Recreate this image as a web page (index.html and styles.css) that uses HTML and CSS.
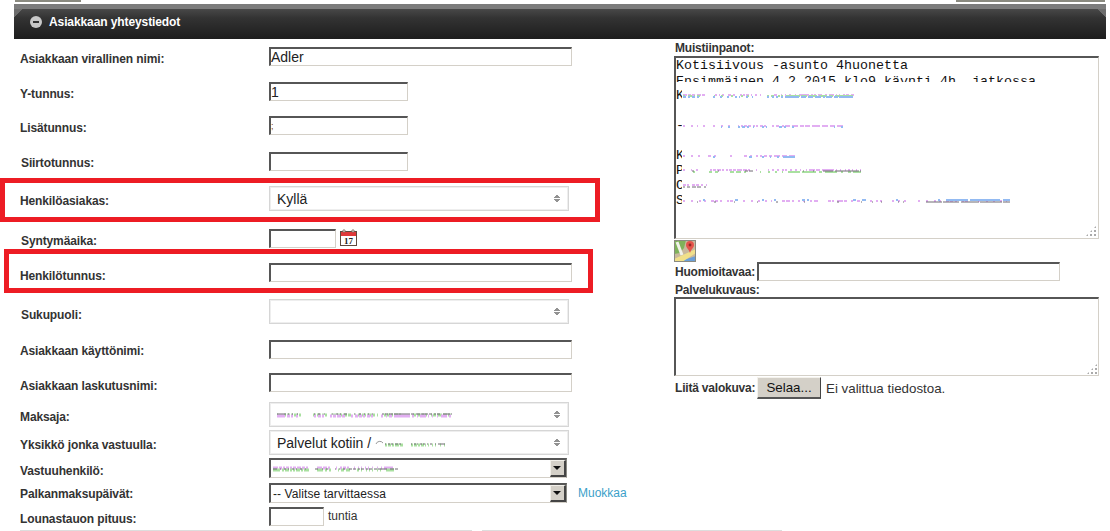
FILE: index.html
```html
<!DOCTYPE html>
<html lang="fi">
<head>
<meta charset="utf-8">
<title>Asiakkaan yhteystiedot</title>
<link rel="stylesheet" href="styles.css">
</head>
<body>
<div class="tabs"><span class="tab tab-a"></span><span class="tab tab-b"></span></div>
<section class="panel">
  <header class="panel-head">
    <span class="collapse"></span>
    <h2 class="panel-title">Asiakkaan yhteystiedot</h2>
  </header>
  <div class="panel-body">
    <form class="fields">
      <label class="lbl o5">Asiakkaan virallinen nimi:</label>
      <div class="ctl"><input class="inp wide big" value="Adler"></div>
      <label class="lbl o5">Y-tunnus:</label>
      <div class="ctl"><input class="inp mid big" value="1"></div>
      <label class="lbl o5">Lisätunnus:</label>
      <div class="ctl"><input class="inp mid tiny" value=";"></div>
      <label class="lbl o4 nudge">Siirtotunnus:</label>
      <div class="ctl"><input class="inp mid"></div>
      <label class="lbl o8">Henkilöasiakas:</label>
      <div class="ctl"><div class="sel"><span class="sel-text">Kyllä</span><span class="updown"></span></div></div>
      <label class="lbl o5 nudge">Syntymäaika:</label>
      <div class="ctl date">
        <input class="inp short">
        <svg class="cal" width="17" height="17" viewBox="0 0 17 17">
          <rect x="0.5" y="2.5" width="16" height="14" fill="#fff" stroke="#5e4a3e"/>
          <rect x="1" y="3" width="15" height="4" fill="#e0393a"/>
          <circle cx="4" cy="2" r="1.3" fill="#d9d0c8" stroke="#6b5a50" stroke-width=".6"/>
          <circle cx="13" cy="2" r="1.3" fill="#d9d0c8" stroke="#6b5a50" stroke-width=".6"/>
          <text x="8.5" y="15" class="cal-num">17</text>
        </svg>
      </div>
      <label class="lbl o6">Henkilötunnus:</label>
      <div class="ctl"><input class="inp wide"></div>
      <label class="lbl o9 nudge">Sukupuoli:</label>
      <div class="ctl"><div class="sel"><span class="sel-text"></span><span class="updown"></span></div></div>
      <label class="lbl o4">Asiakkaan käyttönimi:</label>
      <div class="ctl"><input class="inp wide"></div>
      <label class="lbl o6">Asiakkaan laskutusnimi:</label>
      <div class="ctl"><input class="inp wide"></div>
      <label class="lbl o8">Maksaja:</label>
      <div class="ctl"><div class="sel">
        <svg class="smudge" width="175" height="10" viewBox="0 0 175 10">
          <line class="s-g" x1="0" x2="175" y1="5" y2="5" stroke-dasharray="1 6 2 1 3 1 2 1 4 1 2 12 3 1 4 1 2 1 2 4 1 1 3 1 5 1 4 1 3 4 1 2 3 1 4 1 5 1 2 2"/>
          <line class="s-p" x1="0" x2="175" y1="6" y2="6" stroke-dasharray="8 2 3 1 2 3 2 16 2 2 3 1 2 6 2 1 3 1 4 1 3 6 2 2 3 1 3 1 2 2 3 1 2"/>
          <line class="s-d" x1="0" x2="175" y1="4" y2="4" stroke-dasharray="9 2 1 3 1 4 1 16 1 3 2 4 1 7 1 3 2 2 1 3 3 7 1 4 2 3 1 3 1 3 1"/>
        </svg>
        <span class="updown"></span>
      </div></div>
      <label class="lbl o8">Yksikkö jonka vastuulla:</label>
      <div class="ctl"><div class="sel"><span class="sel-text">Palvelut kotiin / </span>
        <svg class="smudge tail" width="70" height="12" viewBox="0 0 70 12">
          <path class="s-arc" d="M1 7a4 4 0 0 1 7-1"/>
          <line class="s-g" x1="10" x2="70" y1="8" y2="8" stroke-dasharray="2 1 3 1 2 1 4 1 3 8 2 1 3 1 2 1 3 1 1"/>
          <line class="s-d" x1="10" x2="70" y1="7" y2="7" stroke-dasharray="1 2 2 1 2 2 3 1 2 10 1 2 2 1 1 2 2"/>
        </svg>
        <span class="updown"></span>
      </div></div>
      <label class="lbl o6">Vastuuhenkilö:</label>
      <div class="ctl"><div class="combo">
        <svg class="smudge" width="125" height="10" viewBox="0 0 125 10">
          <line class="s-p" x1="0" x2="125" y1="4" y2="4" stroke-dasharray="5 1 3 1 2 1 3 1 2 1 3 1 4 1 3 1 2 9 5 1 4 1 2 6 1 3 2 1 3 1 2"/>
          <line class="s-g" x1="0" x2="125" y1="6" y2="6" stroke-dasharray="7 2 2 1 4 1 2 1 2 1 4 1 2 1 5 8 6 2 2 2 2 7 1 2 3 2 4"/>
          <line class="s-d" x1="0" x2="125" y1="5" y2="5" stroke-dasharray="4 3 1 3 2 2 1 3 2 2 1 3 2 3 1 9 3 4 1 3 2 7 1 3 1 3 2"/>
        </svg>
        <span class="combo-btn"></span>
      </div></div>
      <label class="lbl o4">Palkanmaksupäivät:</label>
      <div class="ctl"><div class="combo"><span class="combo-text">-- Valitse tarvittaessa</span><span class="combo-btn"></span></div><a class="edit" href="#">Muokkaa</a></div>
      <label class="lbl o5">Lounastauon pituus:</label>
      <div class="ctl"><input class="inp lunch"><span class="unit">tuntia</span></div>
    </form>
    <div class="notes">
      <div class="note-label">Muistiinpanot:</div>
      <div class="memo" role="textbox">
        <div class="memo-line">Kotisiivous -asunto 4huonetta</div>
        <div class="memo-line"><span class="cut">Ensimmäinen 4.2.2015 klo9 käynti 4h, jatkossa</span></div>
        <div class="memo-line"><span class="first">K</span>
          <svg class="smudge-m" width="172" height="10" viewBox="0 0 172 10">
            <line class="s-p" x1="0" x2="172" y1="4" y2="4" stroke-dasharray="4 1 3 1 3 2 4 1 3 10 2 2 1 2 2 4 3 2 2 5 2 1 2 1 3 2 1 3 2 3 1 13 3"/>
            <line class="s-g" x1="0" x2="172" y1="5" y2="5" stroke-dasharray="2 3 4 2 1 2 3 14 1 6 2 8 2 8 2 4 2 18 2"/>
            <line class="s-b" x1="0" x2="172" y1="6" y2="6" stroke-dasharray="3 2 2 2 3 2 2 14 2 5 2 5 2 6 2 2 1 6 2 4 1 14 2"/>
          </svg></div>
        <div class="memo-line"></div>
        <div class="memo-line"><span class="first">-</span>
          <svg class="smudge-m" width="160" height="10" viewBox="0 0 160 10">
            <line class="s-p" x1="0" x2="160" y1="5" y2="5" stroke-dasharray="2 6 2 4 1 5 2 8 2 6 2 5 2 8 1 2 2 1 3 1 3 2 2 1 2 2 3 1 2 6 2 2 3 3 2 1 5"/>
            <line class="s-b" x1="0" x2="160" y1="6" y2="6" stroke-dasharray="0 38 1 6 2 8 2 2 3 2 2 4 1 8 2 2 1 12 3 2 2 6 2 2"/>
          </svg></div>
        <div class="memo-line"></div>
        <div class="memo-line"><span class="first">K</span>
          <svg class="smudge-m" width="112" height="10" viewBox="0 0 112 10">
            <line class="s-p" x1="0" x2="112" y1="5" y2="5" stroke-dasharray="2 6 2 5 2 8 3 3 2 14 2 12 3 3 2 4 2 2 2 2 3 2 3"/>
            <line class="s-b" x1="0" x2="112" y1="6" y2="6" stroke-dasharray="0 30 2 34 3 10 2 6 1 6 2 4 2"/>
          </svg></div>
        <div class="memo-line"><span class="first">P</span>
          <svg class="smudge-m" width="178" height="10" viewBox="0 0 178 10">
            <line class="s-p" x1="0" x2="178" y1="4" y2="4" stroke-dasharray="2 6 1 4 2 12 2 1 3 1 4 1 2 2 2 1 3 1 3 1 5 1 4 1 2 6 1 11 1 3 2 3 2 3 2 1 2 3 2 3 2 3 1 5 1"/>
            <line class="s-g" x1="0" x2="178" y1="6" y2="6" stroke-dasharray="0 10 2 14 3 3 3 12 4 2 5 3 2 14 1 7 2 5 2 5 1 5 2"/>
            <line class="s-d" x1="0" x2="178" y1="5" y2="5" stroke-dasharray="0 9 2 24 1 26 3 1 4 50 1 9 1 9 1"/>
          </svg></div>
        <div class="memo-line"><span class="first">C</span>
          <svg class="smudge-m" width="25" height="10" viewBox="0 0 25 10">
            <line class="s-p" x1="0" x2="25" y1="4" y2="4" stroke-dasharray="3 1 2 3 3 1 3 2 2"/>
            <line class="s-d" x1="0" x2="25" y1="6" y2="6" stroke-dasharray="2 2 3 2 4 1 4 3 2"/>
          </svg></div>
        <div class="memo-line"><span class="first">S</span>
          <svg class="smudge-m" width="327" height="10" viewBox="0 0 327 10">
            <line class="s-p" x1="0" x2="327" y1="5" y2="5" stroke-dasharray="2 6 2 6 2 3 2 5 3 1 3 2 2 5 2 1 3 10 2 6 2 5 2 5 2 4 1 10 3 1 4 2 2 4 2 3 2 5 2 2 4 10 3 1 2 3 6 1 3 4 2 4 3 10 2 4 2 2 2 10 2 4 2 4 2 12"/>
            <line class="s-b" x1="0" x2="327" y1="4" y2="4" stroke-dasharray="0 20 2 30 3 24 2 10 2 26 3 2 2 44 3 6 4 30 2 40 2 6 2"/>
            <line class="s-d" x1="0" x2="327" y1="6" y2="6" stroke-dasharray="0 14 1 16 2 18 1 22 1 18 2 26 1 32 2 22 1 10 1 8 1 16 1 4 1 22 2"/>
          </svg></div>
        <span class="grip"></span>
      </div>
      <svg class="map" width="22" height="22" viewBox="0 0 22 22">
        <rect width="22" height="22" fill="#c9b99c"/>
        <path d="M0 0h12l-2 8-4 5-6 1z" fill="#7fb25a"/>
        <path d="M3 22 22 16v6z" fill="#6b9fd8"/>
        <path d="M0 22v-3l22-10v4L8 22z" fill="#f1e08a"/>
        <path d="M3 2 8 15" stroke="#f2f3ea" stroke-width="3" fill="none"/>
        <path d="M16 13c-1-4-4-5-4-8a4 4 0 0 1 8 0c0 3-3 4-4 8z" fill="#e5534b"/>
        <circle cx="16" cy="5" r="1.4" fill="#8f2a24"/>
        <rect x=".5" y=".5" width="21" height="21" fill="none" stroke="#8a8a80"/>
      </svg>
      <div class="note-row"><span class="note-label">Huomioitavaa:</span><input class="inp attn"></div>
      <div class="note-label after-row">Palvelukuvaus:</div>
      <div class="desc"><textarea class="desc-area"></textarea><span class="grip"></span></div>
      <div class="file-row">
        <span class="note-label file-label">Liitä valokuva:</span>
        <button class="browse" type="button">Selaa...</button>
        <span class="file-name">Ei valittua tiedostoa.</span>
      </div>
    </div>
  </div>
</section>
<div class="foot"><span class="foot-a"></span><span class="foot-b"></span></div>
<div class="mark mark-a"></div>
<div class="mark mark-b"></div>
</body>
</html>
```
FILE: styles.css
```css
* { box-sizing: border-box; }
html, body { height: 531px; overflow: hidden; }
body {
  margin: 0;
  position: relative;
  background: #fff;
  color: #333;
  font-family: "Liberation Sans", Arial, sans-serif;
  font-size: 12px;
}
.tabs { display: flex; height: 4px; padding-left: 15px; }
.tab { display: block; height: 2px; background: #8a8a80; }
.tab-a { width: 66px; }
.tab-b { width: 149px; margin-left: 875px; }

.panel { margin: 0 4px 0 14px; }
.panel-head {
  height: 35px;
  display: flex;
  align-items: center;
  padding: 0 0 0 16px;
  border-top: 5px solid #7c7c7c;
  background:
    linear-gradient(225deg, #6c6c6c 6px, transparent 6px) no-repeat right top / 12px 12px,
    linear-gradient(135deg, #6c6c6c 6px, transparent 6px) no-repeat left top / 12px 12px,
    linear-gradient(#484848 0, #333 30%, #1d1d1d 100%);
  gap: 7px;
}
.collapse {
  width: 12px; height: 12px; border-radius: 50%;
  background: #c8c8c8;
  position: relative;
  margin-top: -5px;
  flex: none;
}
.collapse::after {
  content: ""; position: absolute; left: 3px; top: 5px; width: 6px; height: 2px; background: #333;
}
.panel-title {
  margin: -5px 0 0; font-size: 12px; font-weight: bold; color: #fff; line-height: 14px;
  letter-spacing: -.1px;
}

.panel-body { display: flex; padding-top: 8px; }
.fields {
  width: 660px;
  flex: none;
  display: grid;
  grid-template-columns: 255px 1fr;
  grid-template-rows: 35px 34px 36px 34px 43px 34px 36px 41px 33px 29px 28px 28px 25px 24px 24px;
  padding: 0;
}
.lbl {
  padding-left: 6px;
  font-weight: bold;
  font-size: 12px;
  line-height: 14px;
  letter-spacing: -.12px;
  color: #333;
}
.nudge { padding-left: 7px; }
.o4 { padding-top: 4px; }
.o5 { padding-top: 5px; }
.o6 { padding-top: 6px; }
.o8 { padding-top: 8px; }
.o9 { padding-top: 9px; }
.ctl { display: flex; align-items: flex-start; }
.date { gap: 4px; }

.inp {
  display: block;
  height: 19px;
  margin: 0;
  padding: 0 1px;
  border-style: solid;
  border-width: 2px 1px 1px 2px;
  border-color: #565656 #d4d0c8 #d4d0c8 #565656;
  background: #fff;
  font-family: "Liberation Sans", Arial, sans-serif;
  color: #222;
  outline: none;
  border-radius: 0;
}
.big { font-size: 14px; line-height: 15px; padding: 0; }
.tiny { font-size: 9px; color: #7a3a10; padding: 0; }
.wide { width: 303px; }
.mid { width: 139px; }
.short { width: 67px; }
.lunch { width: 55px; }
.attn { width: 303px; }
.cal { display: block; flex: none; }
.cal-num {
  font-family: "Liberation Serif", serif; font-weight: bold; font-size: 9px;
  text-anchor: middle; fill: #222;
}

.sel {
  position: relative;
  width: 300px; height: 25px;
  border: 1px solid #d6d6d6;
  display: flex; align-items: center;
  padding: 0 7px;
  font-size: 14px;
  color: #222;
  box-shadow: inset 0 0 0 1px #eee;
}
.sel-text { white-space: pre; }
.updown {
  position: absolute; right: 8px; top: 7px; width: 6px; height: 9px;
  background:
    linear-gradient(to top left, #929292 50%, transparent 50%) left 0 top 0 / 3px 4px no-repeat,
    linear-gradient(to top right, #929292 50%, transparent 50%) right 0 top 0 / 3px 4px no-repeat,
    linear-gradient(to bottom left, #929292 50%, transparent 50%) left 0 bottom 0 / 3px 4px no-repeat,
    linear-gradient(to bottom right, #929292 50%, transparent 50%) right 0 bottom 0 / 3px 4px no-repeat;
}
.combo {
  display: flex; align-items: center; justify-content: space-between;
  width: 298px; height: 20px;
  border-style: solid;
  border-width: 2px 1px 1px 2px;
  border-color: #565656 #8a8a84 #d4d0c8 #565656;
  padding-left: 2px;
  color: #222;
  font-size: 12px;
  letter-spacing: .08px;
}
.combo-text { white-space: pre; }
.combo-btn {
  position: relative;
  width: 16px; height: 17px; flex: none;
  background: #d4d0c8;
  border-style: solid;
  border-width: 1px 2px 2px 1px;
  border-color: #f2f0ea #444 #444 #f2f0ea;
}
.combo-btn::after {
  content: ""; position: absolute; left: 2px; top: 5px;
  border: 4px solid transparent; border-top: 4px solid #111; border-bottom: 0;
}
.edit { margin: 3px 0 0 11px; color: #3b9fc9; text-decoration: none; font-size: 12px; line-height: 14px; }
.unit { margin: 2px 0 0 4px; font-size: 12px; line-height: 14px; color: #333; }

.smudge { display: block; }
.smudge line { stroke-width: 3; }
.smudge .s-d { stroke-width: 1; }
.smudge-m { display: block; margin-left: 1px; }
line { stroke-width: 2; fill: none; }
.s-g { stroke: #a9e0a0; }
.s-p { stroke: #e2aef2; }
.s-b { stroke: #92baf2; }
.s-d { stroke: #6e6a72; stroke-width: 1; }
.s-arc { stroke: #999; fill: none; stroke-width: 1; }

.notes { width: 425px; flex: none; margin-top: -6px; }
.note-label {
  font-weight: bold; font-size: 12px; line-height: 14px; color: #333; padding-left: 1px;
  letter-spacing: -.2px;
}
.memo {
  position: relative;
  height: 183px;
  margin-top: 1px;
  border-style: solid;
  border-width: 2px 1px 1px 2px;
  border-color: #565656 #d4d0c8 #d4d0c8 #565656;
  font-family: "Liberation Mono", "Courier New", monospace;
  font-size: 13.33px;
  color: #111;
  overflow: hidden;
}
.memo-line { height: 15px; line-height: 15px; white-space: pre; display: flex; align-items: center; }
.cut { display: block; height: 8px; overflow: hidden; line-height: 15px; margin-top: -6px; }
.first { display: block; width: 6px; height: 15px; overflow: hidden; flex: none; }
.grip {
  position: absolute; right: 1px; bottom: 1px; width: 12px; height: 12px;
  background: radial-gradient(circle, #aaa 0 1.2px, transparent 1.2px) right 0 bottom 0 / 4px 4px;
  clip-path: polygon(100% 0, 100% 100%, 0 100%);
}
.map { display: block; margin-top: 1px; }
.note-row { display: flex; align-items: flex-start; height: 19px; }
.note-row .note-label { padding-top: 3px; width: 83px; flex: none; }
.after-row { margin-top: 2px; }
.desc { position: relative; height: 79px; }
.desc-area {
  display: block;
  width: 100%; height: 100%;
  margin: 0; padding: 0;
  resize: none;
  outline: none;
  border-style: solid;
  border-width: 2px 1px 1px 2px;
  border-color: #565656 #d4d0c8 #d4d0c8 #565656;
  border-radius: 0;
}
.file-row { display: flex; align-items: center; height: 22px; margin-top: 1px; }
.file-label { width: 83px; flex: none; }
.browse {
  width: 64px; height: 22px;
  margin: 0;
  padding: 0;
  background: #d4d0c8;
  border-style: solid;
  border-color: #f4f2ec #444 #555 #f4f2ec;
  border-width: 1px 1px 2px 1px;
  font-family: "Liberation Sans", Arial, sans-serif;
  font-size: 13.33px;
  color: #111;
}
.file-name { margin-left: 5px; font-size: 13.33px; color: #333; }

.foot {
  position: absolute; left: 20px; top: 530px; display: flex; gap: 10px; height: 1px;
}
.foot-a { display: block; width: 452px; background: #ddd; }
.foot-b { display: block; width: 300px; background: #ddd; }

.mark { position: absolute; border: 5px solid #ed1c24; pointer-events: none; }
.mark-a { left: 0; top: 178px; width: 600px; height: 44px; }
.mark-b { left: 4px; top: 249px; width: 589px; height: 44px; }
```
